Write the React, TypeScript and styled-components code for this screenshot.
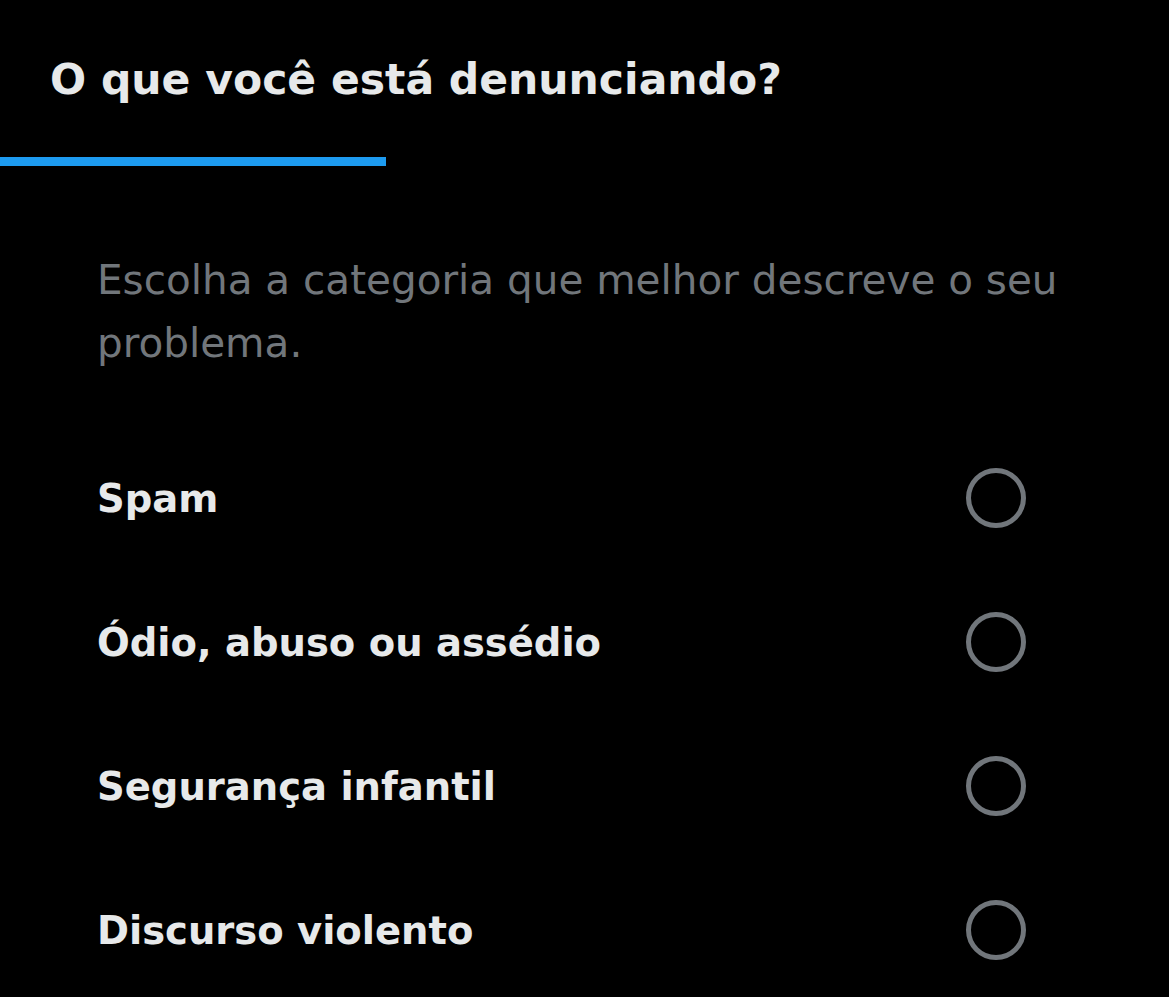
import React from "react";
import styled, { createGlobalStyle } from "styled-components";

const GlobalStyle = createGlobalStyle`
  html, body {
    margin: 0;
    padding: 0;
    background: #000;
  }
  body {
    font-family: "DejaVu Sans", "Liberation Sans", sans-serif;
    -webkit-font-smoothing: antialiased;
  }
`;

const Screen = styled.div`
  width: 1169px;
  height: 997px;
  overflow: hidden;
  background: #000;
  color: #e7e9ea;
`;

const Header = styled.header`
  height: 157px;
  padding: 50px 0 0 50px;
  box-sizing: border-box;
`;

const Title = styled.h1`
  margin: 0;
  font-size: 42.5px;
  font-weight: 700;
  line-height: 60px;
  white-space: nowrap;
`;

const Progress = styled.div`
  height: 9px;
`;

const ProgressFill = styled.div`
  height: 100%;
  background: #1d9bf0;
`;

const Body = styled.div`
  padding: 83px 100px 0 97px;
`;

const Hint = styled.p`
  margin: 0 0 51px;
  font-size: 40.5px;
  line-height: 63px;
  font-weight: 400;
  color: #71767b;
`;

const OptionList = styled.ul`
  list-style: none;
  margin: 0 43px 0 0;
  padding: 0;
`;

const Option = styled.li`
  display: flex;
  align-items: center;
  justify-content: space-between;
  height: 144px;
  cursor: pointer;
`;

const OptionLabel = styled.span`
  font-size: 38.5px;
  font-weight: 700;
  color: #e7e9ea;
`;

const Radio = styled.span<{ $checked?: boolean }>`
  flex: none;
  width: 60px;
  height: 60px;
  box-sizing: border-box;
  border-radius: 50%;
  border: 5px solid ${(p) => (p.$checked ? "#1d9bf0" : "#71767b")};
`;

const options = [
  "Spam",
  "Ódio, abuso ou assédio",
  "Segurança infantil",
  "Discurso violento",
];

export default function App() {
  const step = 0.33;
  return (
    <Screen>
      <GlobalStyle />
      <Header>
        <Title>O que você está denunciando?</Title>
      </Header>
      <Progress>
        <ProgressFill style={{ width: `${step * 1169}px` }} />
      </Progress>
      <Body>
        <Hint>Escolha a categoria que melhor descreve o seu problema.</Hint>
        <OptionList>
          {options.map((o) => (
            <Option key={o}>
              <OptionLabel>{o}</OptionLabel>
              <Radio />
            </Option>
          ))}
        </OptionList>
      </Body>
    </Screen>
  );
}
